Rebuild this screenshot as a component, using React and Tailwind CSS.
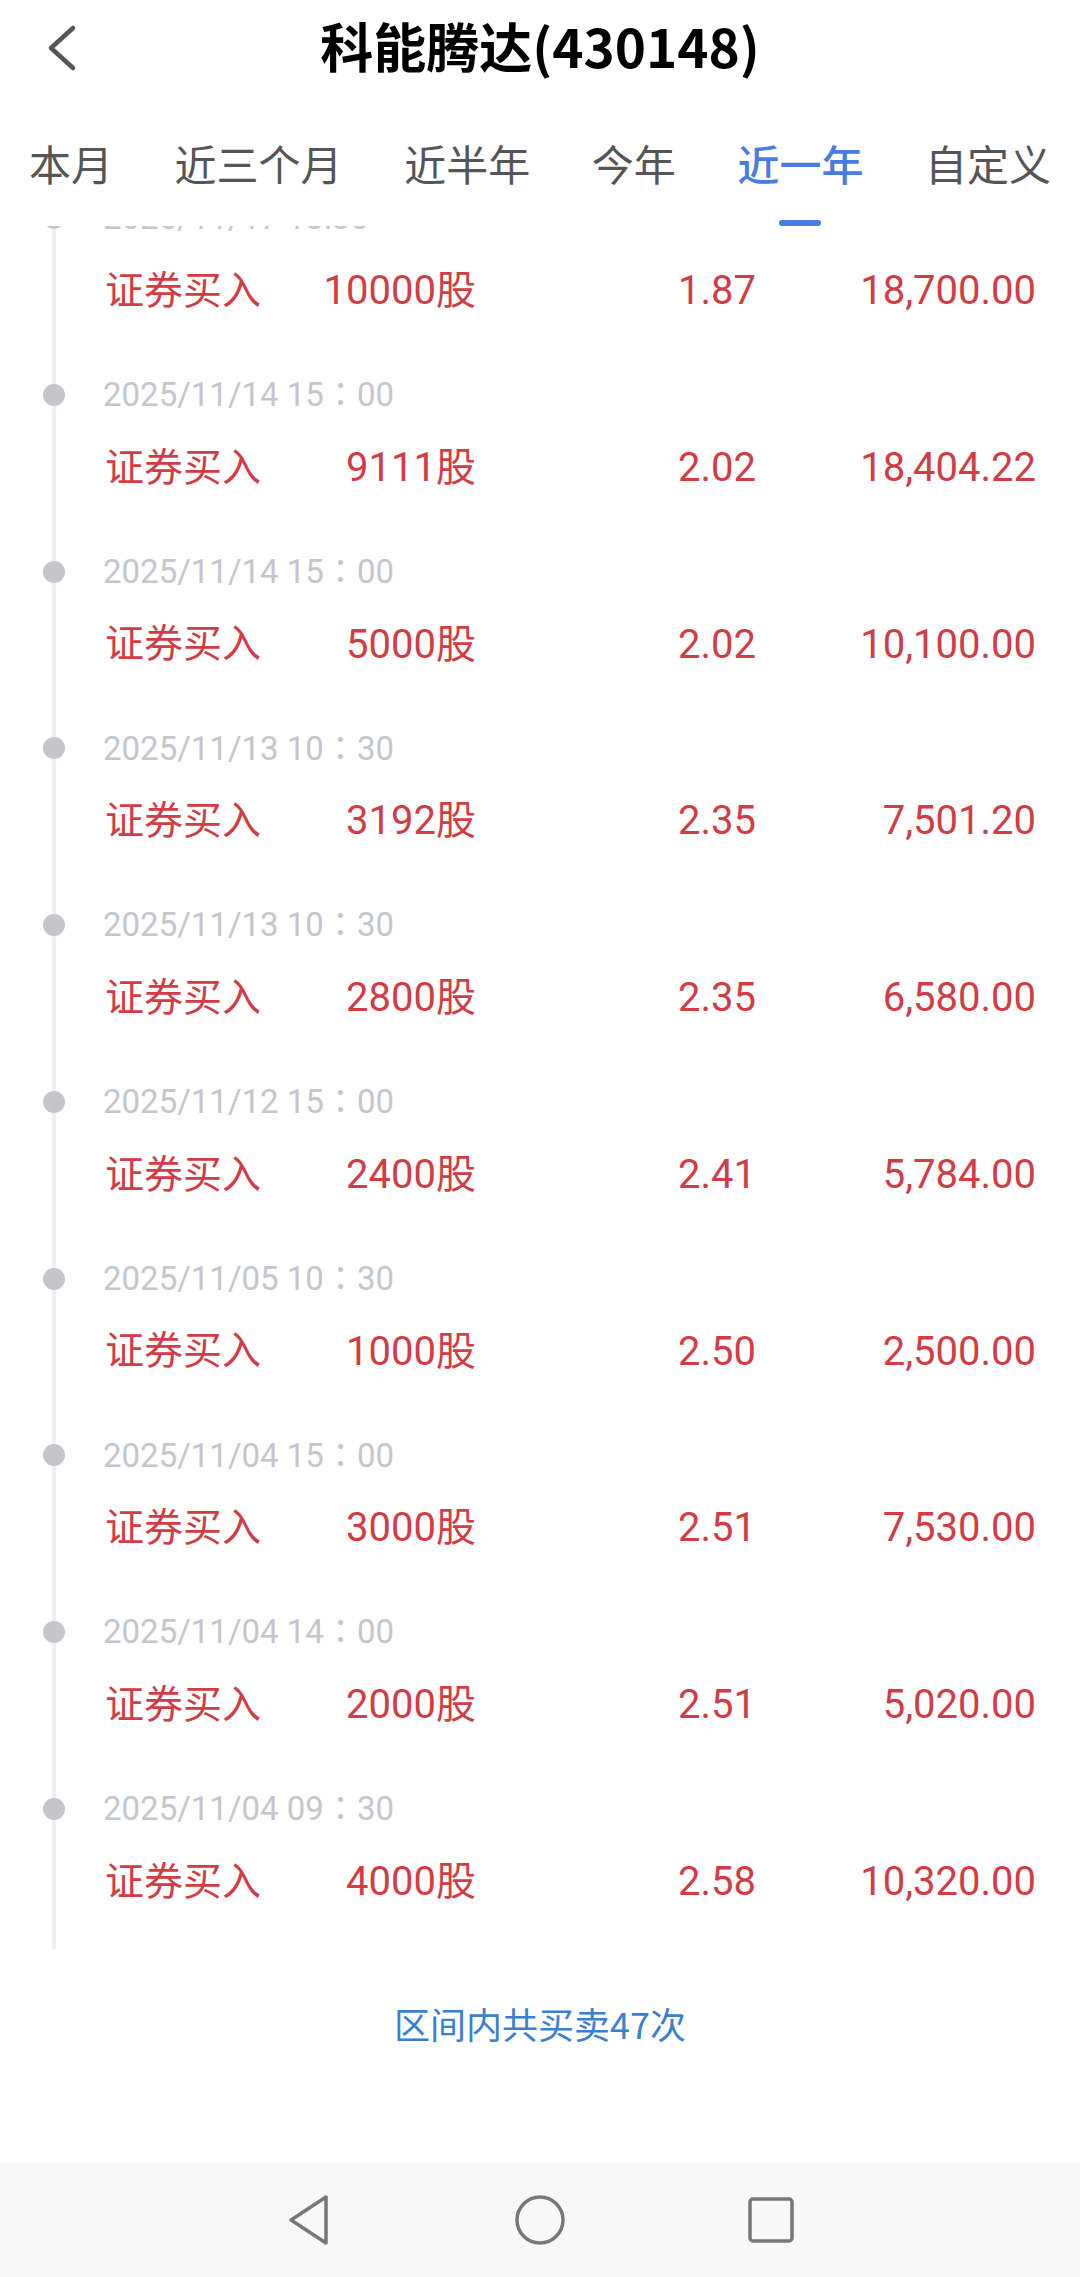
import React from "react";

const tabs = ["本月", "近三个月", "近半年", "今年", "近一年", "自定义"];

const trades = [
  { time: "2025/11/17 13:30", shares: "10000股", price: "1.87", amount: "18,700.00" },
  { time: "2025/11/14 15：00", shares: "9111股", price: "2.02", amount: "18,404.22" },
  { time: "2025/11/14 15：00", shares: "5000股", price: "2.02", amount: "10,100.00" },
  { time: "2025/11/13 10：30", shares: "3192股", price: "2.35", amount: "7,501.20" },
  { time: "2025/11/13 10：30", shares: "2800股", price: "2.35", amount: "6,580.00" },
  { time: "2025/11/12 15：00", shares: "2400股", price: "2.41", amount: "5,784.00" },
  { time: "2025/11/05 10：30", shares: "1000股", price: "2.50", amount: "2,500.00" },
  { time: "2025/11/04 15：00", shares: "3000股", price: "2.51", amount: "7,530.00" },
  { time: "2025/11/04 14：00", shares: "2000股", price: "2.51", amount: "5,020.00" },
  { time: "2025/11/04 09：30", shares: "4000股", price: "2.58", amount: "10,320.00" },
];

function TradeItem({ trade, first }) {
  return (
    <div className={`h-[176.75px] ${first ? "mt-[-44.5px]" : ""}`}>
      <div className="h-[73px] flex items-center">
        <span className="w-[22px] h-[22px] ml-[-13px] rounded-full bg-[#c5c6cb] shrink-0" />
        <span className="ml-[38px] text-[33px] text-[#c4c6cc] font-['Roboto','Noto_Sans_CJK_TC',sans-serif]">
          {trade.time}
        </span>
      </div>
      <div className="h-[73px] flex items-center pl-[49px] text-[40px] text-[#d23c44] font-['Roboto','Noto_Sans_CJK_SC',sans-serif]">
        <span className="w-[160px] shrink-0 text-[39px]">证券买入</span>
        <span className="w-[211px] shrink-0 text-right">{trade.shares}</span>
        <span className="w-[280px] shrink-0 text-right">{trade.price}</span>
        <span className="w-[280px] shrink-0 text-right">{trade.amount}</span>
      </div>
    </div>
  );
}

export default function App() {
  return (
    <div className="w-[1080px] h-[2277px] bg-white flex flex-col overflow-hidden font-['Noto_Sans_CJK_SC',sans-serif]">
      <div className="h-[90px] flex items-center relative shrink-0">
        <div className="w-[108px] pl-[46px] flex items-center mt-[6px]">
          <svg width="34" height="50" viewBox="0 0 34 50" fill="none">
            <path d="M27 5 L5 25 L27 45" stroke="#555" strokeWidth="4.5" strokeLinecap="round" strokeLinejoin="round" />
          </svg>
        </div>
        <h1 className="flex-1 text-center pr-[108px] text-[53px] font-semibold text-black leading-none">
          科能腾达(430148)
        </h1>
      </div>

      <div className="h-[136px] flex justify-between px-[29px] pt-[45px] shrink-0">
        {tabs.map((t) => (
          <div key={t} className="flex flex-col items-center">
            <span
              className={`text-[42px] leading-[56px] ${
                t === "近一年" ? "text-[#4a7be0] font-medium" : "text-[#555]"
              }`}
            >
              {t}
            </span>
            <span
              className={`mt-[29px] w-[42px] h-[6px] rounded-full ${
                t === "近一年" ? "bg-[#4a7be0]" : "bg-transparent"
              }`}
            />
          </div>
        ))}
      </div>

      <div className="overflow-hidden shrink-0">
        <div className="ml-[52px] border-l-[4px] border-[#eceff3]">
          {trades.map((t, i) => (
            <TradeItem key={i} trade={t} first={i === 0} />
          ))}
        </div>
      </div>

      <div className="mt-[49px] text-center text-[36px] leading-[50px] text-[#3b7fd0]">
        区间内共买卖47次
      </div>

      <div className="mt-auto h-[114px] bg-[#f8f8f8] flex items-center shrink-0">
        <div className="w-[309px] flex justify-end">
          <svg width="46" height="54" viewBox="0 0 46 54" className="mr-[-23px]">
            <path d="M40 4 L40 50 L5 27 Z" stroke="#777" strokeWidth="3.5" fill="none" strokeLinejoin="round" />
          </svg>
        </div>
        <div className="w-[462px] flex justify-center">
          <svg width="54" height="54" viewBox="0 0 54 54">
            <circle cx="27" cy="27" r="23" stroke="#777" strokeWidth="3.5" fill="none" />
          </svg>
        </div>
        <div className="flex">
          <svg width="48" height="48" viewBox="0 0 48 48" className="ml-[-24px]">
            <rect x="3" y="3" width="42" height="42" rx="3" stroke="#777" strokeWidth="3.5" fill="none" />
          </svg>
        </div>
      </div>
    </div>
  );
}
